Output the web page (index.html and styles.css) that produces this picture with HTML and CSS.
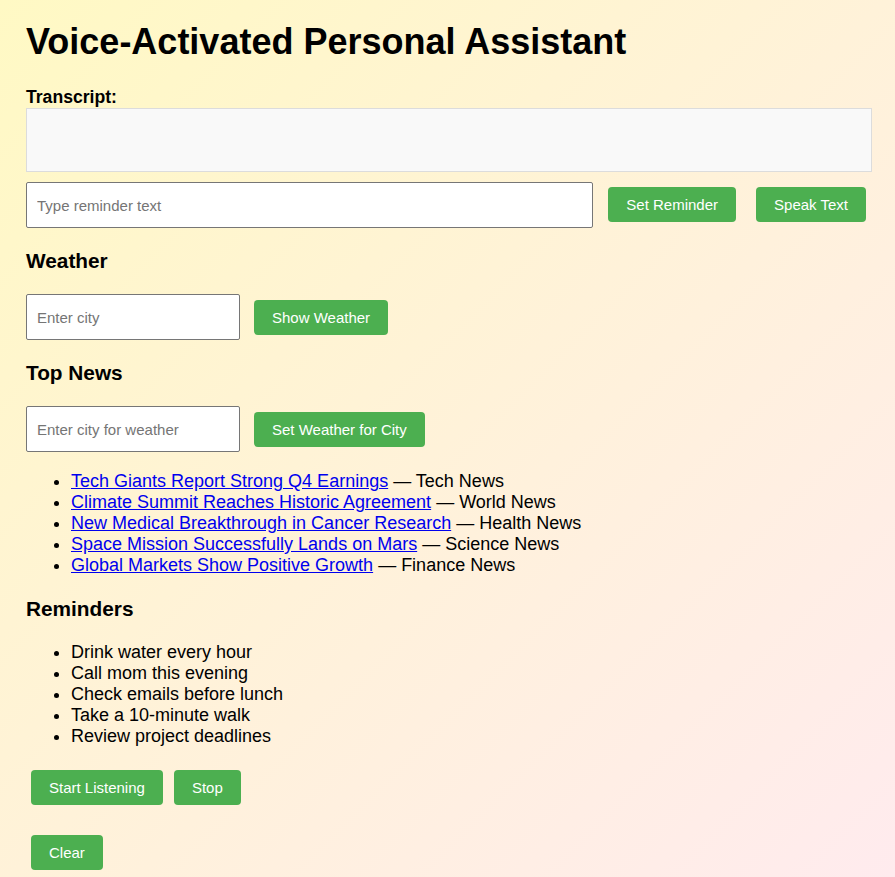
FILE: index.html
```html
<!DOCTYPE html>
<html lang="en">
<head>
<meta charset="utf-8">
<title>Voice-Activated Personal Assistant</title>
<link rel="stylesheet" href="styles.css">
</head>
<body>
<div class="app">
  <h1 class="title">Voice-Activated Personal Assistant</h1>
  <div class="label">Transcript:</div>
  <div class="transcript"></div>
  <div class="row row-main">
    <input class="field field-grow" type="text" placeholder="Type reminder text">
    <button class="btn btn-first">Set Reminder</button>
    <button class="btn btn-next">Speak Text</button>
  </div>

  <h3 class="section-title st-weather">Weather</h3>
  <div class="row row-weather">
    <input class="field field-small" type="text" placeholder="Enter city">
    <button class="btn btn-first">Show Weather</button>
  </div>

  <h3 class="section-title st-news">Top News</h3>
  <div class="row row-news">
    <input class="field field-small" type="text" placeholder="Enter city for weather">
    <button class="btn btn-first">Set Weather for City</button>
  </div>
  <ul class="list news-list">
    <li><a href="#">Tech Giants Report Strong Q4 Earnings</a> — Tech News</li>
    <li><a href="#">Climate Summit Reaches Historic Agreement</a> — World News</li>
    <li><a href="#">New Medical Breakthrough in Cancer Research</a> — Health News</li>
    <li><a href="#">Space Mission Successfully Lands on Mars</a> — Science News</li>
    <li><a href="#">Global Markets Show Positive Growth</a> — Finance News</li>
  </ul>

  <h3 class="section-title st-reminders">Reminders</h3>
  <ul class="list reminder-list">
    <li>Drink water every hour</li>
    <li>Call mom this evening</li>
    <li>Check emails before lunch</li>
    <li>Take a 10-minute walk</li>
    <li>Review project deadlines</li>
  </ul>

  <div class="controls">
    <button class="btn">Start Listening</button>
    <button class="btn">Stop</button>
  </div>
  <div class="controls controls-clear">
    <button class="btn">Clear</button>
  </div>
</div>
</body>
</html>
```
FILE: styles.css
```css
html {
  height: 100%;
}

body {
  margin: 0;
  min-height: 100%;
  font-family: "Liberation Sans", Arial, sans-serif;
  color: #000;
  background: linear-gradient(135deg, #fff9c4 0%, #ffebee 100%);
}

.app {
  padding: 21px 23px 0 26px;
}

.title {
  margin: 0;
  font-size: 36px;
  line-height: 41px;
  font-weight: bold;
}

.label {
  margin-top: 25px;
  font-size: 17.6px;
  line-height: 21px;
  font-weight: bold;
}

.transcript {
  box-sizing: border-box;
  height: 64px;
  border: 1px solid #dcdcdc;
  background: #f9f9f9;
}

.row {
  display: flex;
  align-items: flex-start;
}

.row .btn {
  margin-top: 6px;
}

.row-main {
  margin-top: 10px;
  padding-right: 6px;
}

.row-main .btn {
  margin-top: 5px;
}

.row-weather {
  margin-top: 21px;
}

.row-news {
  margin-top: 21px;
}

.field {
  box-sizing: border-box;
  height: 46px;
  padding: 0 10px;
  border: 1px solid #767676;
  border-radius: 2px;
  background: #fff;
  font-family: "Liberation Sans", Arial, sans-serif;
  font-size: 15px;
  color: #000;
  outline: none;
}

.field::placeholder {
  color: #757575;
}

.field-grow {
  flex: 1;
  min-width: 0;
}

.field-small {
  width: 214px;
}

.btn {
  box-sizing: border-box;
  height: 35px;
  padding: 0 18px;
  border: none;
  border-radius: 4px;
  background: #4caf50;
  color: #fff;
  font-family: "Liberation Sans", Arial, sans-serif;
  font-size: 15px;
  line-height: 17px;
  cursor: pointer;
}

.btn-first {
  margin-left: 14px;
}

.row-main .btn-first {
  margin-left: 15px;
}

.btn-next {
  margin-left: 20px;
}

.section-title {
  margin: 0;
  font-size: 20.8px;
  line-height: 24px;
  font-weight: bold;
}

.st-weather {
  margin-top: 21px;
}

.st-news {
  margin-top: 21px;
}

.st-reminders {
  margin-top: 21px;
}

.list {
  margin: 0;
  padding-left: 45px;
  font-size: 18px;
  line-height: 21px;
}

.news-list {
  margin-top: 19px;
}

.reminder-list {
  margin-top: 21px;
}

.list a {
  color: #0000ee;
  text-decoration: underline;
}

.controls {
  display: flex;
  gap: 11px;
  margin-top: 23px;
  padding-left: 5px;
}

.controls-clear {
  margin-top: 30px;
}
```
